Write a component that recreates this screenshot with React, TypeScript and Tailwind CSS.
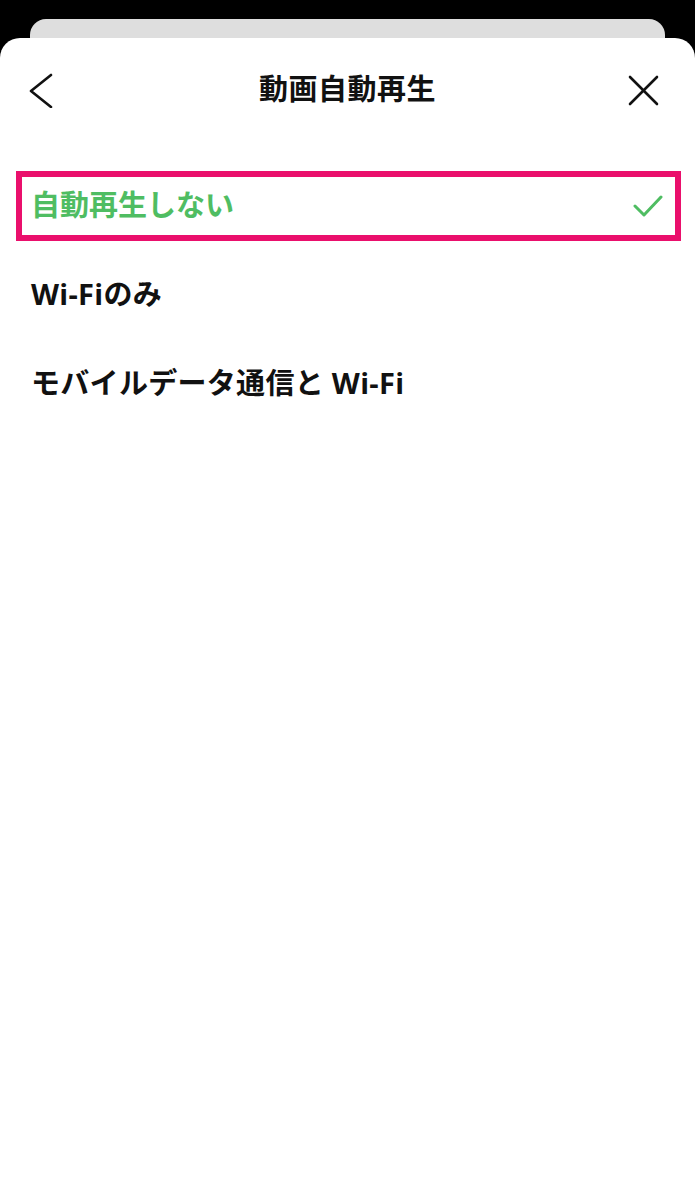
export default function App() {
  const font = { fontFamily: '"Open Sans", "Noto Sans CJK JP", "Noto Sans", sans-serif' };
  const options = ["自動再生しない", "Wi-Fiのみ", "モバイルデータ通信と Wi-Fi"];

  return (
    <div className="w-[695px] h-[1200px] bg-black flex flex-col overflow-hidden" style={font}>
      {/* stacked card behind */}
      <div className="mx-[30px] mt-[19px] h-[19px] shrink-0 rounded-t-[16px] bg-[#dedede]" />

      {/* sheet */}
      <div className="flex-1 bg-white rounded-t-[20px] flex flex-col">
        <div className="relative h-[104px] flex items-center justify-center shrink-0">
          <svg className="absolute left-[26px] top-[34px]" width="32" height="36" viewBox="0 0 32 36" fill="none">
            <polyline points="25,3 5,19 25,35" stroke="#111" strokeWidth="2.6" strokeLinecap="round" strokeLinejoin="round" />
          </svg>
          <h1 className="text-[29px] font-bold text-[#111] tracking-[0.5px] pb-[2px]">動画自動再生</h1>
          <svg className="absolute left-[626px] top-[36px]" width="36" height="34" viewBox="0 0 36 34" fill="none">
            <line x1="4" y1="3" x2="31" y2="30" stroke="#111" strokeWidth="2.6" strokeLinecap="round" />
            <line x1="31" y1="3" x2="4" y2="30" stroke="#111" strokeWidth="2.6" strokeLinecap="round" />
          </svg>
        </div>

        <ul className="mt-[19px] flex flex-col">
          {options.map((label, i) =>
            i === 0 ? (
              <li key={label} className="h-[89px] flex items-center">
                <div className="ml-[16px] mr-[14px] flex-1 h-[70px] border-[6px] border-[#ea0f6c] flex items-center justify-between pl-[9px] pr-[12px]">
                  <span className="text-[29px] font-bold text-[#4fbd62] pb-[1px]">{label}</span>
                  <svg width="30" height="22" viewBox="0 0 30 22" fill="none">
                    <polyline points="2,11 11,20 28,2" stroke="#4fbd62" strokeWidth="3" strokeLinecap="round" strokeLinejoin="round" />
                  </svg>
                </div>
              </li>
            ) : (
              <li key={label} className="h-[89px] flex items-center pl-[31px]">
                <span className="text-[29px] font-bold text-[#111] pb-[1px] tracking-[0.3px]">{label}</span>
              </li>
            )
          )}
        </ul>
      </div>
    </div>
  );
}
